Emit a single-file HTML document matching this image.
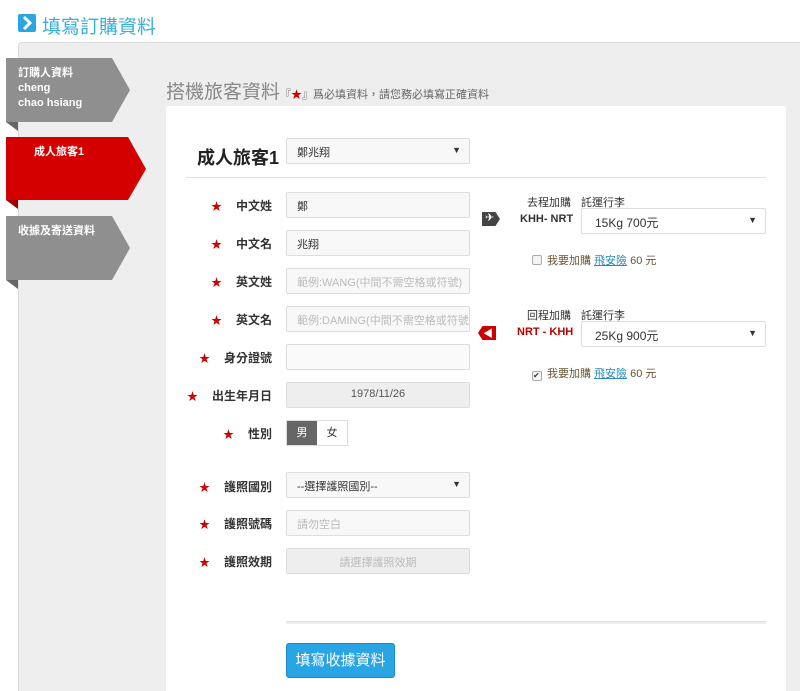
<!DOCTYPE html>
<html><head><meta charset="utf-8"><style>
*{box-sizing:border-box;margin:0;padding:0}
html,body{width:800px;height:691px;overflow:hidden}
body{background:#fff;font-family:"Liberation Sans","Noto Sans CJK TC",sans-serif;position:relative;color:#333}
.a{position:absolute}
.title{left:18px;top:12px;font-size:19px;color:#3aaed8}
.ic{left:18px;top:14px;width:18px;height:18px;background:#2aa6dc;border-radius:2px}
.wrap{left:18px;top:42px;width:790px;height:660px;background:#eee;border:1px solid #ddd;border-radius:4px}
.tab{color:#fff;font-weight:bold;font-size:11px;line-height:15px;padding:8px 0 0 12px}
.card{left:166px;top:106px;width:620px;height:600px;background:#fff;border-radius:3px}
.inp{position:absolute;left:286px;width:184px;height:26px;border:1px solid #ddd;background:#f8f8f8;font-size:11px;color:#333;padding:5px 10px;border-radius:2px;white-space:nowrap;overflow:hidden}
.ph{color:#bbb}
.lbl{position:absolute;left:172px;font-size:12px;font-weight:bold;color:#333;text-align:right;width:100px;white-space:nowrap}
.st{color:#c00;font-size:11px;margin-right:14px}
.arr{position:absolute;right:8px;top:6px;font-size:9px}
.sm{font-size:11px;color:#333}
</style></head><body>
<div class="a ic"><svg width="18" height="18"><path d="M6 3l6 6-6 6" stroke="#fff" stroke-width="3" fill="none"/></svg></div>
<div class="a title" style="left:42px">填寫訂購資料</div>
<div class="a wrap"></div>

<svg class="a" style="left:0;top:50px" width="160" height="250">
<g fill="#666"><polygon points="6,72 18,72 18,81"/><polygon points="6,230 18,230 18,239"/></g>
<polygon fill="#8f8f8f" points="6,8 112,8 130,40 112,72 6,72"/>
<polygon fill="#9a0000" points="6,150 18,150 18,159"/>
<polygon fill="#d40000" points="6,87 128,87 146,119 128,150 6,150"/>
<polygon fill="#8f8f8f" points="6,166 112,166 130,198 112,230 6,230"/>
</svg>
<div class="a tab" style="left:6px;top:58px">訂購人資料<br>cheng<br>chao hsiang</div>
<div class="a tab" style="left:22px;top:137px">成人旅客1</div>
<div class="a tab" style="left:6px;top:216px">收據及寄送資料</div>

<div class="a" style="left:166px;top:77px;font-size:19px;color:#888">搭機旅客資料<span style="font-size:11px;color:#666">『<span style="color:#c00">★</span>』爲必填資料，請您務必填寫正確資料</span></div>
<div class="a card"></div>
<div class="a" style="left:197px;top:144px;font-size:18px;font-weight:bold;color:#222">成人旅客1</div>
<div class="inp" style="top:138px;height:26px;background:#f8f8f8">鄭兆翔<span class="arr">▼</span></div>
<div class="a" style="left:186px;top:177px;width:580px;height:1px;background:#ddd"></div>

<div class="lbl" style="top:197px"><span class="st">★</span>中文姓</div>
<div class="inp" style="top:192px">鄭</div>
<div class="lbl" style="top:235px"><span class="st">★</span>中文名</div>
<div class="inp" style="top:230px">兆翔</div>
<div class="lbl" style="top:273px"><span class="st">★</span>英文姓</div>
<div class="inp ph" style="top:268px">範例:WANG(中間不需空格或符號)</div>
<div class="lbl" style="top:311px"><span class="st">★</span>英文名</div>
<div class="inp ph" style="top:306px">範例:DAMING(中間不需空格或符號)</div>
<div class="lbl" style="top:349px"><span class="st">★</span>身分證號</div>
<div class="inp" style="top:344px;background:#fafafa"></div>
<div class="lbl" style="top:387px"><span class="st">★</span>出生年月日</div>
<div class="inp" style="top:382px;background:#eee;text-align:center;color:#555">1978/11/26</div>
<div class="lbl" style="top:425px"><span class="st">★</span>性別</div>
<div class="a" style="left:286px;top:420px;width:62px;height:26px;border:1px solid #ddd;font-size:11px">
<div class="a" style="left:0;top:0;width:30px;height:24px;background:#666;color:#fff;text-align:center;line-height:24px">男</div>
<div class="a" style="left:30px;top:0;width:30px;height:24px;text-align:center;line-height:24px">女</div></div>
<div class="lbl" style="top:478px"><span class="st">★</span>護照國別</div>
<div class="inp" style="top:472px">--選擇護照國別--<span class="arr">▼</span></div>
<div class="lbl" style="top:515px"><span class="st">★</span>護照號碼</div>
<div class="inp ph" style="top:510px">請勿空白</div>
<div class="lbl" style="top:553px"><span class="st">★</span>護照效期</div>
<div class="inp ph" style="top:548px;background:#eee;text-align:center">請選擇護照效期</div>

<!-- right -->
<div class="a sm" style="left:527px;top:194px">去程加購</div>
<div class="a sm" style="left:581px;top:194px">託運行李</div>
<div class="a" style="left:482px;top:212px;width:18px;height:14px;background:#444;clip-path:polygon(0 0,75% 0,100% 50%,75% 100%,0 100%)"><span style="position:absolute;left:3px;top:-1px;color:#fff;font-size:11px">✈</span></div>
<div class="a" style="left:520px;top:213px;font-size:11px;font-weight:bold">KHH- NRT</div>
<div class="inp" style="left:581px;top:208px;width:185px;background:#fff;font-size:12px;padding-left:13px">15Kg 700元<span class="arr">▼</span></div>
<div class="a sm" style="left:532px;top:252px;color:#665533"><span style="display:inline-block;width:10px;height:10px;border:1px solid #aaa;border-radius:2px;background:#f4f4f4;margin-right:5px;vertical-align:-1px"></span>我要加購 <span style="color:#2a8ab8;text-decoration:underline">飛安險</span> 60 元</div>

<div class="a sm" style="left:527px;top:307px">回程加購</div>
<div class="a sm" style="left:581px;top:307px">託運行李</div>
<div class="a" style="left:478px;top:326px;width:18px;height:14px;background:#c00;clip-path:polygon(25% 0,100% 0,100% 100%,25% 100%,0 50%)"><span style="position:absolute;left:5px;top:-1px;color:#fff;font-size:10px">◀</span></div>
<div class="a" style="left:517px;top:326px;font-size:11px;font-weight:bold;color:#b00">NRT - KHH</div>
<div class="inp" style="left:581px;top:321px;width:185px;background:#fff;font-size:12px;padding-left:13px">25Kg 900元<span class="arr">▼</span></div>
<div class="a sm" style="left:532px;top:365px;color:#665533"><span style="display:inline-block;width:10px;height:10px;border:1px solid #aaa;border-radius:2px;background:#f4f4f4;margin-right:5px;vertical-align:-1px;font-size:8px;line-height:8px;color:#333">✔</span>我要加購 <span style="color:#2a8ab8;text-decoration:underline">飛安險</span> 60 元</div>

<div class="a" style="left:286px;top:621px;width:480px;height:3px;background:#eee;border-top:1px solid #ddd"></div>
<div class="a" style="left:286px;top:643px;width:109px;height:35px;background:#29a4e4;border:1px solid #1c8cc8;border-radius:3px;color:#fff;font-size:15px;text-align:center;line-height:33px">填寫收據資料</div>
</body></html>
